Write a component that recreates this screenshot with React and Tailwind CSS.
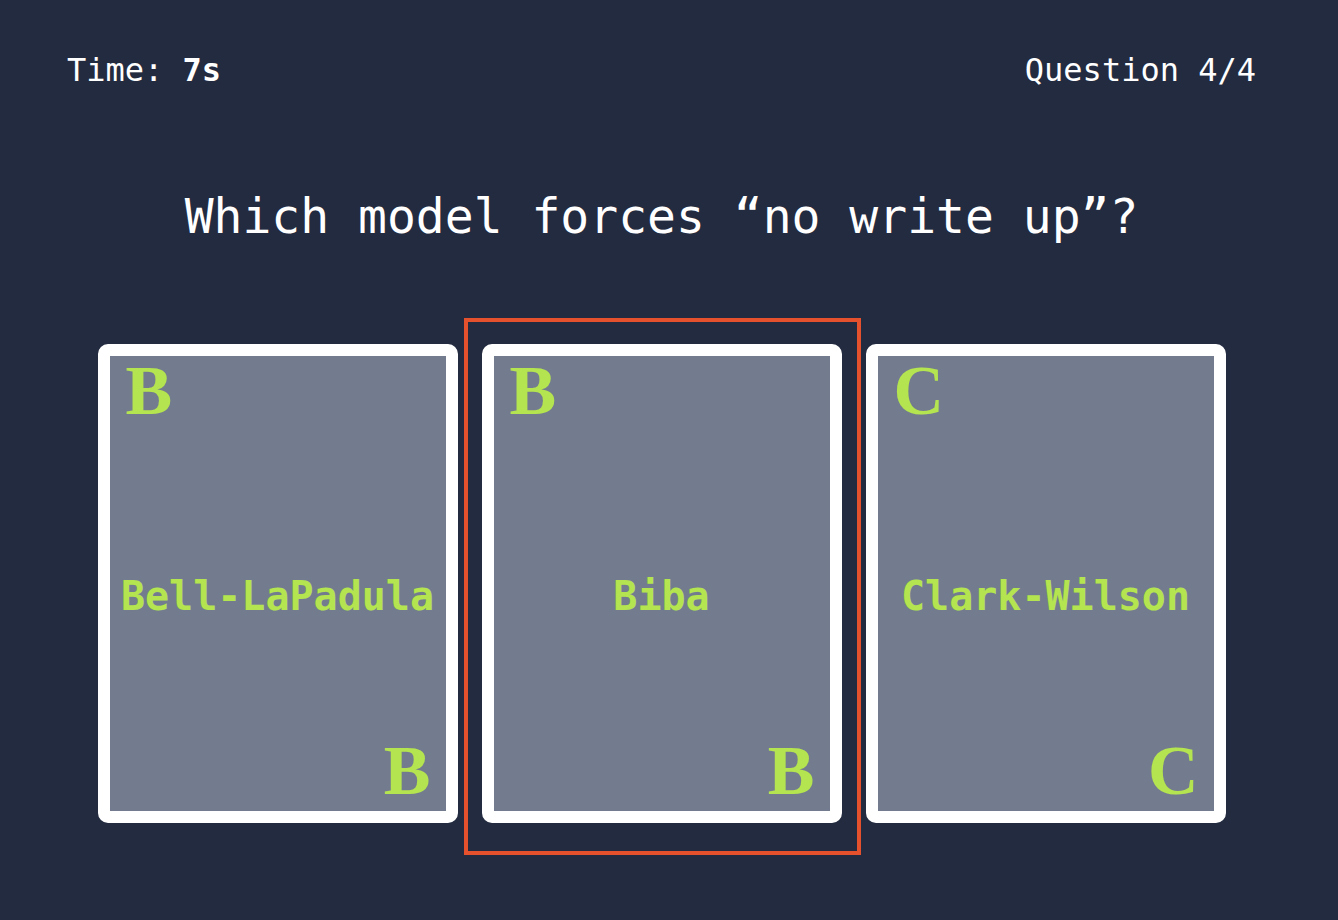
import React from 'react';

const cards = [
  { letter: 'B', label: 'Bell-LaPadula' },
  { letter: 'B', label: 'Biba', selected: true },
  { letter: 'C', label: 'Clark-Wilson' },
];

const mono = { fontFamily: '"DejaVu Sans Mono", "Liberation Mono", monospace' };
const serif = { fontFamily: '"Liberation Serif", serif' };

const Card = ({ letter, label, selected }) => (
  <div className="relative">
    {selected && (
      <div className="absolute -left-[18px] -right-[19px] -top-[26px] -bottom-[32px] border-4 border-[#e5512c]" />
    )}
    <div className="relative w-[360px] h-[479px] rounded-[10px] border-[12px] border-white bg-[#737c8e]">
      <span
        className="absolute left-[16px] top-0 text-[70px] font-bold leading-none text-[#b4e44f]"
        style={serif}
      >
        {letter}
      </span>
      <div className="h-full flex items-center justify-center pt-[25px]">
        <span className="text-[40px] font-bold text-[#b4e44f]" style={mono}>
          {label}
        </span>
      </div>
      <span
        className="absolute right-[15px] bottom-[5px] text-[70px] font-bold leading-none text-[#b4e44f]"
        style={serif}
      >
        {letter}
      </span>
    </div>
  </div>
);

const App = () => {
  return (
    <div className="min-h-[920px] w-full bg-[#232b40] text-white" style={mono}>
      <div className="w-[1323px]">
        {/* Header */}
        <div className="flex justify-between px-[67px] pt-[50px] text-[32px] leading-[40px]">
          <div>
            Time: <span className="font-bold">7s</span>
          </div>
          <div>Question 4/4</div>
        </div>

        {/* Question */}
        <h1 className="mt-[96px] text-center text-[48px] leading-[60px]">
          Which model forces “no write up”?
        </h1>

        {/* Cards */}
        <div className="mt-[98px] flex justify-center gap-6">
          {cards.map((card, i) => (
            <Card key={i} {...card} />
          ))}
        </div>
      </div>
    </div>
  );
};

export default App;
